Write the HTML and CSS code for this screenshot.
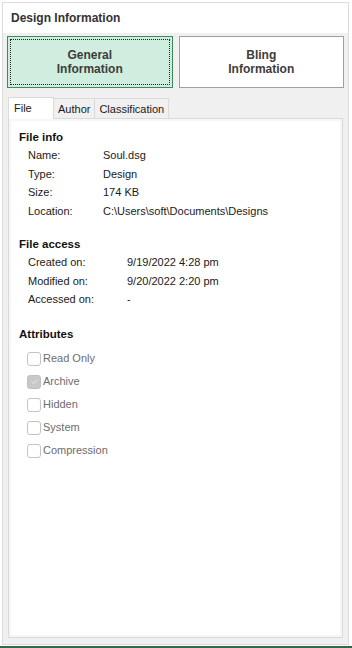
FILE: index.html
```html
<!DOCTYPE html>
<html lang="en">
<head>
    <meta charset="UTF-8">
    <title>Design Information</title>
    <link rel="stylesheet" href="styles.css">
</head>
<body>
    <div class="panel">
        <div class="panel-header">Design Information</div>
        <div class="panel-body">
            <div class="switch-row">
                <button class="switch-btn active"><span class="focus">General<br>Information</span></button>
                <button class="switch-btn">Bling<br>Information</button>
            </div>

            <div class="tabs">
                <div class="tab selected">File</div>
                <div class="tab">Author</div>
                <div class="tab">Classification</div>
            </div>

            <div class="tab-page">
                <h3>File info</h3>
                <div class="prop-grid">
                    <span>Name:</span><span>Soul.dsg</span>
                    <span>Type:</span><span>Design</span>
                    <span>Size:</span><span>174 KB</span>
                    <span>Location:</span><span>C:\Users\soft\Documents\Designs</span>
                </div>

                <h3>File access</h3>
                <div class="prop-grid wide">
                    <span>Created on:</span><span>9/19/2022 4:28 pm</span>
                    <span>Modified on:</span><span>9/20/2022 2:20 pm</span>
                    <span>Accessed on:</span><span>-</span>
                </div>

                <h3>Attributes</h3>
                <div class="checks">
                    <label class="check"><span class="box"></span>Read Only</label>
                    <label class="check"><span class="box checked">
                        <svg width="9" height="9" viewBox="0 0 9 9"><path d="M1.5 4.5 L3.5 6.5 L7.5 2.5" fill="none" stroke="#e8e8e8" stroke-width="1"/></svg>
                    </span>Archive</label>
                    <label class="check"><span class="box"></span>Hidden</label>
                    <label class="check"><span class="box"></span>System</label>
                    <label class="check"><span class="box"></span>Compression</label>
                </div>
            </div>
        </div>
    </div>
    <div class="bottom-line"></div>
</body>
</html>
```

FILE: styles.css
```css
html, body {
    margin: 0;
    padding: 0;
    background: #ffffff;
}
body {
    font-family: "Liberation Sans", Arial, sans-serif;
    font-size: 11px;
    color: #1a1a1a;
    height: 648px;
    display: flex;
    flex-direction: column;
}
.panel {
    margin: 2px 3px 0 2px;
    border: 1px solid #dcdcdc;
    flex: 1;
    display: flex;
    flex-direction: column;
}
.panel-header {
    height: 30px;
    line-height: 30px;
    padding-left: 8px;
    font-size: 12px;
    font-weight: bold;
    color: #333333;
    background: #ffffff;
}
.panel-body {
    flex: 1;
    background: #f0f0f0;
    padding: 3px 4px 6px 4px;
    display: flex;
    flex-direction: column;
}
.switch-row {
    display: flex;
    gap: 6px;
}
.switch-btn {
    width: 166px;
    height: 52px;
    padding: 2px;
    font-family: "Liberation Sans", Arial, sans-serif;
    font-size: 12px;
    font-weight: bold;
    line-height: 14px;
    color: #3c3c3c;
    background: #ffffff;
    border: 1px solid #a0a0a0;
    display: flex;
    align-items: center;
    justify-content: center;
}
.switch-btn.active {
    background: #d0eedf;
    border-color: #3f8a5c;
}
.focus {
    flex: 1;
    align-self: stretch;
    display: flex;
    align-items: center;
    justify-content: center;
    border: 1px dotted #222222;
}
.tabs {
    display: flex;
    align-items: flex-end;
    margin: 9px 0 0 1px;
    height: 21px;
}
.tab {
    height: 19px;
    line-height: 20px;
    padding: 0 4px;
    background: #f0f0f0;
    border: 1px solid #dadada;
    border-bottom: none;
    color: #1a1a1a;
}
.tab + .tab {
    border-left: none;
}
.tab.selected {
    height: 21px;
    line-height: 20px;
    width: 34px;
    padding: 0 5px;
    background: #ffffff;
    position: relative;
    z-index: 1;
    margin-bottom: -1px;
}
.tab-page {
    flex: 1;
    margin: 0 1px 0 1px;
    background: #ffffff;
    border: 1px solid #dadada;
    box-shadow: inset 0 0 0 2px #f6f6f6;
    padding: 10px 10px;
}
.tab-page h3 {
    margin: 0 0 3px 0;
    font-size: 11.5px;
    line-height: 16px;
    font-weight: bold;
    color: #111111;
}
.prop-grid {
    display: grid;
    grid-template-columns: 75px auto;
    row-gap: 3.67px;
    padding-left: 9px;
    margin-bottom: 17px;
    line-height: 15px;
}
.prop-grid.wide {
    grid-template-columns: 99px auto;
    margin-bottom: 19px;
}
.checks {
    display: flex;
    flex-direction: column;
    gap: 8px;
    padding-left: 8px;
    padding-top: 6px;
    color: #6d6d6d;
}
.check {
    display: flex;
    align-items: center;
    gap: 2px;
    line-height: 15px;
}
.box {
    width: 12px;
    height: 12px;
    border: 1px solid #c4c4c4;
    border-radius: 3px;
    background: #ffffff;
    display: flex;
    align-items: center;
    justify-content: center;
}
.box.checked {
    background: #c8c8c8;
    border-color: #c0c0c0;
}
.bottom-line {
    height: 2px;
    margin-top: 1px;
    background: #2e6b4a;
}
```
